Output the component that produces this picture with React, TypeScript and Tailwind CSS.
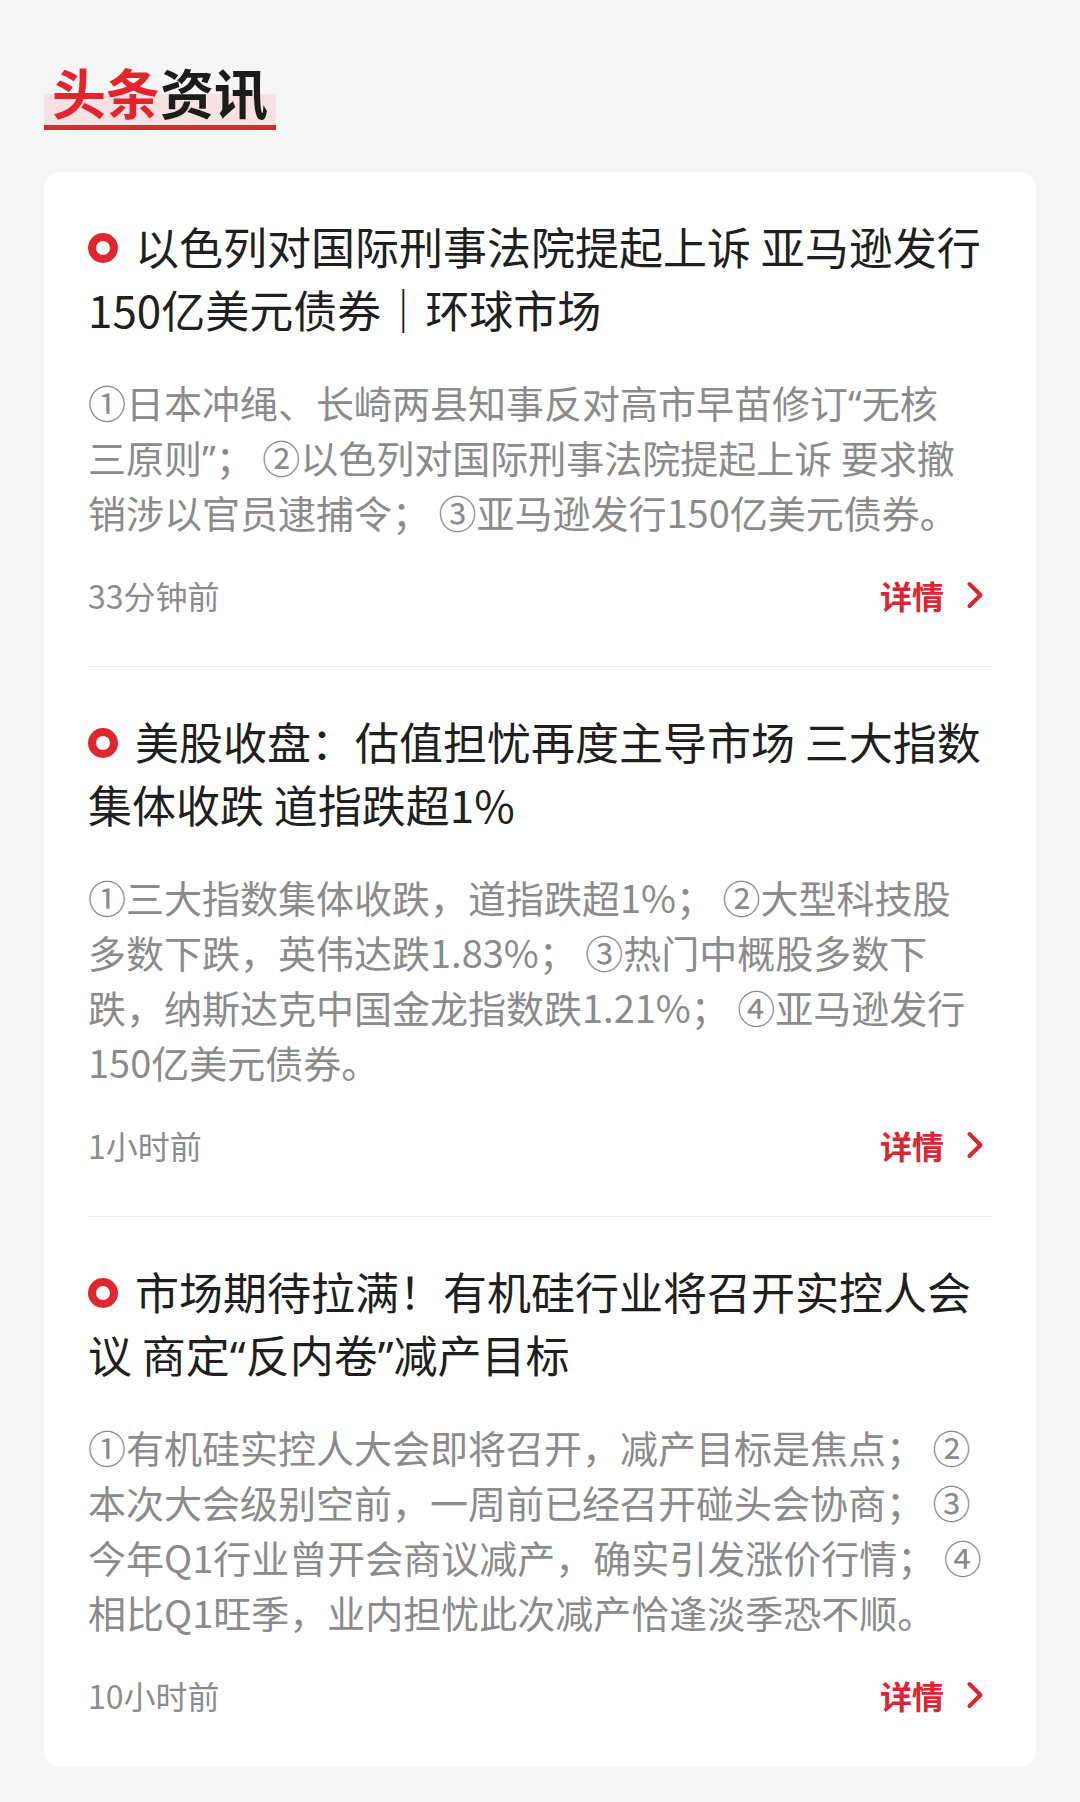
const news = [
  {
    title: ["以色列对国际刑事法院提起上诉 亚马逊发行", "150亿美元债券｜环球市场"],
    summary: [
      "①日本冲绳、长崎两县知事反对高市早苗修订“无核",
      "三原则”； ②以色列对国际刑事法院提起上诉 要求撤",
      "销涉以官员逮捕令； ③亚马逊发行150亿美元债券。",
    ],
    time: "33分钟前",
  },
  {
    title: ["美股收盘：估值担忧再度主导市场 三大指数", "集体收跌 道指跌超1%"],
    summary: [
      "①三大指数集体收跌，道指跌超1%； ②大型科技股",
      "多数下跌，英伟达跌1.83%； ③热门中概股多数下",
      "跌，纳斯达克中国金龙指数跌1.21%； ④亚马逊发行",
      "150亿美元债券。",
    ],
    time: "1小时前",
  },
  {
    title: ["市场期待拉满！有机硅行业将召开实控人会", "议 商定“反内卷”减产目标"],
    summary: [
      "①有机硅实控人大会即将召开，减产目标是焦点； ②",
      "本次大会级别空前，一周前已经召开碰头会协商； ③",
      "今年Q1行业曾开会商议减产，确实引发涨价行情； ④",
      "相比Q1旺季，业内担忧此次减产恰逢淡季恐不顺。",
    ],
    time: "10小时前",
  },
];

// curly quotes are narrow (proportional) in the original, so set them in a latin face
const withQuotes = (s: string) =>
  s.split(/([“”])/).map((part, k) =>
    part === "“" || part === "”" ? (
      <span key={k} className="font-['Noto_Sans',sans-serif] leading-none">
        {part}
      </span>
    ) : (
      part
    )
  );

const App: React.FC = () => {
  return (
    <div className="min-h-screen bg-[#f6f6f6] px-[44px] pt-[59px] pb-[36px] font-['Noto_Sans_CJK_SC','Noto_Sans',sans-serif]">
      {/* Section heading */}
      <div className="inline-block border-b-[5px] border-[#e3242b] bg-[linear-gradient(to_bottom,transparent_35px,#f8e1e2_35px)] px-[8px] text-[54px] leading-[66px] font-bold">
        <span className="text-[#e3242b]">头条</span>
        <span className="text-[#1c1c1c]">资讯</span>
      </div>

      <div className="mt-[42px] rounded-[14px] bg-white px-[44px]">
        {news.map((item, i) => (
          <div
            key={i}
            className={
              i < news.length - 1
                ? "border-b border-[#ededed] pt-[43px] pb-[51px]"
                : "pt-[43px] pb-[51px]"
            }
          >
            <p className="whitespace-nowrap text-[44px] leading-[63px] text-[#1f1f1f]">
              <span className="mr-[17px] inline-block h-[30px] w-[30px] rounded-full border-[8px] border-[#e0262f] align-[2px]"></span>
              {withQuotes(item.title[0])}
              <br />
              {withQuotes(item.title[1])}
            </p>

            <p className="mt-[33px] whitespace-nowrap text-[38px] leading-[55px] text-[#8b8b8b]">
              {item.summary.map((line, j) => (
                <span key={j} className="block">
                  {withQuotes(line)}
                </span>
              ))}
            </p>

            <div className="mt-[36px] flex items-center justify-between">
              <span className="text-[32px] leading-[40px] text-[#8c8c8c]">{item.time}</span>
              <a href="#" className="flex items-center text-[32px] leading-[40px] font-bold text-[#db2530]">
                详情
                <svg className="ml-[22px] mr-[8px]" width="18" height="28" viewBox="0 0 18 28" fill="none">
                  <path d="M3.5 3 L14.5 14 L3.5 25" stroke="#db2530" strokeWidth="4" strokeLinecap="round" strokeLinejoin="round" />
                </svg>
              </a>
            </div>
          </div>
        ))}
      </div>
    </div>
  );
};

export default App;
